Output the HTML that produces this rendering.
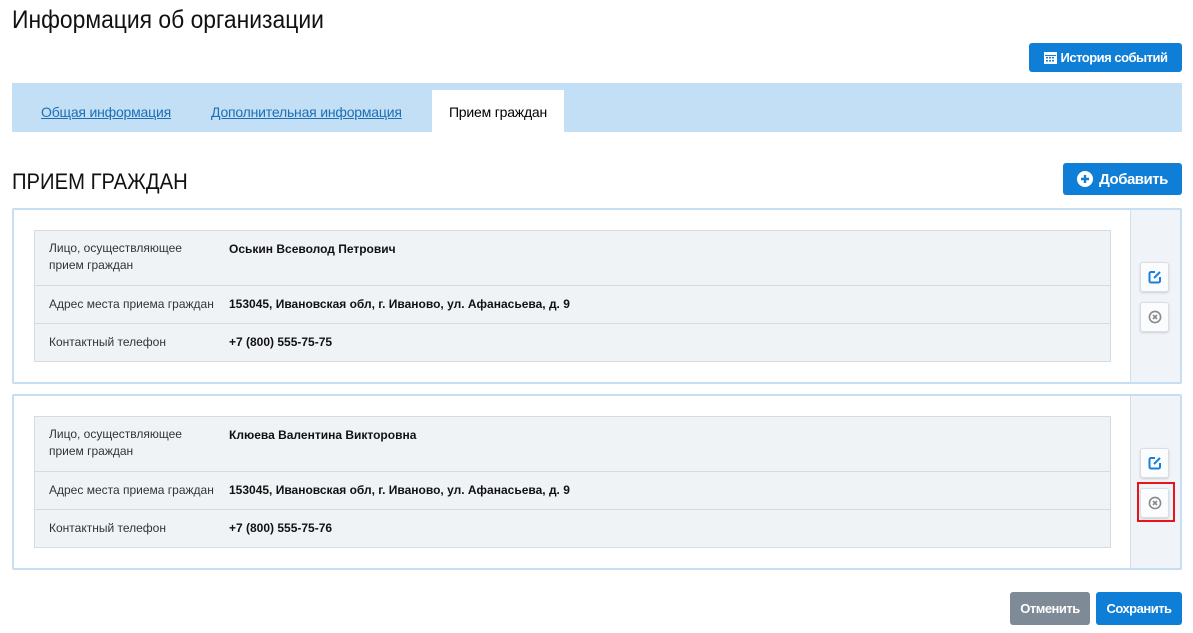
<!DOCTYPE html>
<html><head><meta charset="utf-8"><style>
*{box-sizing:border-box;margin:0;padding:0}
body{width:1193px;height:633px;background:#fff;font-family:"Liberation Sans",sans-serif;position:relative;overflow:hidden;color:#000}
.a{position:absolute}
.cond{font-family:"Liberation Sans Narrow","Liberation Sans",sans-serif}
.btn{position:absolute;background:#0f7ed6;color:#fff;border-radius:3px;font-size:14px;font-weight:bold;display:flex;align-items:center;justify-content:center;letter-spacing:-0.5px}
.card{position:absolute;left:12px;width:1170px;height:176px;border:2px solid #c5def3;border-radius:2px}
.side{position:absolute;right:0;top:0;bottom:0;width:50px;background:#f0f3f7;border-left:1px solid #d5dde6}
.tbl{position:absolute;left:20px;top:20px;width:1077px;height:132px;background:#f0f3f6;border:1px solid #d5dbe1}
.row{position:absolute;left:0;right:0;border-bottom:1px solid #d5dbe1;font-size:12px}
.row .l{position:absolute;left:14px;color:#333;line-height:17px}
.row .v{position:absolute;left:194px;font-weight:bold;color:#111}
.ib{position:absolute;left:9px;width:29px;height:30px;background:#fbfcfd;border:1px solid #d8dee5;border-radius:3px;box-shadow:0 1px 2px rgba(0,0,0,.15);display:flex;align-items:center;justify-content:center}
</style></head><body>
<div class="a cond" style="left:12px;top:6px;font-size:25px;color:#111;transform:scaleX(.915);transform-origin:left">Информация об организации</div>
<div class="btn" style="left:1029px;top:43px;width:153px;height:29px;font-size:13px"><svg width="13" height="13" viewBox="0 0 13 13" style="margin-right:4px"><rect x="0" y="1" width="13" height="12" fill="#fff"/><g fill="#0f7ed6"><rect x="1" y="4" width="11" height="1"/><rect x="2" y="6" width="2" height="1.5"/><rect x="5" y="6" width="2" height="1.5"/><rect x="8" y="6" width="2" height="1.5"/><rect x="2" y="9" width="2" height="1.5"/><rect x="5" y="9" width="2" height="1.5"/><rect x="8" y="9" width="2" height="1.5"/></g></svg>История событий</div>
<div class="a" style="left:12px;top:83px;width:1170px;height:49px;background:#c2dff5"></div>
<div class="a" style="left:41px;top:104px;font-size:14px;color:#1d6fb5;text-decoration:underline;letter-spacing:-0.2px">Общая информация</div>
<div class="a" style="left:211px;top:104px;font-size:14px;color:#1d6fb5;text-decoration:underline;letter-spacing:-0.2px">Дополнительная информация</div>
<div class="a" style="left:432px;top:90px;width:132px;height:42px;background:#fff;font-size:14px;text-align:center;padding-top:14px;letter-spacing:-0.2px">Прием граждан</div>
<div class="a cond" style="left:12px;top:169px;font-size:22px;color:#111;transform:scaleX(.92);transform-origin:left">ПРИЕМ ГРАЖДАН</div>
<div class="btn" style="left:1063px;top:163px;width:119px;height:32px;font-size:15px"><svg width="16" height="16" viewBox="0 0 16 16" style="margin-right:6px"><circle cx="8" cy="8" r="8" fill="#fff"/><path d="M8 4v8M4 8h8" stroke="#0f7ed6" stroke-width="2.4"/></svg>Добавить</div>

<div class="card" style="top:208px">
<div class="tbl">
<div class="row" style="top:0;height:55px"><div class="l" style="top:9px">Лицо, осуществляющее<br>прием граждан</div><div class="v" style="top:11px">Оськин Всеволод Петрович</div></div>
<div class="row" style="top:55px;height:38px"><div class="l" style="top:10px">Адрес места приема граждан</div><div class="v" style="top:11px">153045, Ивановская обл, г. Иваново, ул. Афанасьева, д. 9</div></div>
<div class="row" style="top:93px;height:38px;border:0"><div class="l" style="top:10px">Контактный телефон</div><div class="v" style="top:11px">+7 (800) 555-75-75</div></div>
</div>
<div class="side">
<div class="ib" style="top:52px"><svg width="14" height="14" viewBox="0 0 14 14"><path d="M7 2H3a1.5 1.5 0 0 0-1.5 1.5v7.5A1.5 1.5 0 0 0 3 12.5h7.5A1.5 1.5 0 0 0 12 11V7" fill="none" stroke="#1a7fd8" stroke-width="2"/><path d="M6 8l6-6" stroke="#1a7fd8" stroke-width="2"/></svg></div>
<div class="ib" style="top:92px"><svg width="14" height="14" viewBox="0 0 14 14"><circle cx="7" cy="7" r="5.6" fill="none" stroke="#8a8a8a" stroke-width="1.6"/><path d="M5 5l4 4M9 5l-4 4" stroke="#8a8a8a" stroke-width="1.6"/></svg></div>
</div>
</div>

<div class="card" style="top:394px">
<div class="tbl">
<div class="row" style="top:0;height:55px"><div class="l" style="top:9px">Лицо, осуществляющее<br>прием граждан</div><div class="v" style="top:11px">Клюева Валентина Викторовна</div></div>
<div class="row" style="top:55px;height:38px"><div class="l" style="top:10px">Адрес места приема граждан</div><div class="v" style="top:11px">153045, Ивановская обл, г. Иваново, ул. Афанасьева, д. 9</div></div>
<div class="row" style="top:93px;height:38px;border:0"><div class="l" style="top:10px">Контактный телефон</div><div class="v" style="top:11px">+7 (800) 555-75-76</div></div>
</div>
<div class="side">
<div class="ib" style="top:52px"><svg width="14" height="14" viewBox="0 0 14 14"><path d="M7 2H3a1.5 1.5 0 0 0-1.5 1.5v7.5A1.5 1.5 0 0 0 3 12.5h7.5A1.5 1.5 0 0 0 12 11V7" fill="none" stroke="#1a7fd8" stroke-width="2"/><path d="M6 8l6-6" stroke="#1a7fd8" stroke-width="2"/></svg></div>
<div class="ib" style="top:92px"><svg width="14" height="14" viewBox="0 0 14 14"><circle cx="7" cy="7" r="5.6" fill="none" stroke="#8a8a8a" stroke-width="1.6"/><path d="M5 5l4 4M9 5l-4 4" stroke="#8a8a8a" stroke-width="1.6"/></svg></div>
</div>
</div>
<div class="a" style="left:1137px;top:482px;width:38px;height:40px;border:2px solid #e8141b"></div>

<div class="btn" style="left:1010px;top:592px;width:80px;height:33px;background:#7e8a95;font-size:13px">Отменить</div>
<div class="btn" style="left:1096px;top:592px;width:86px;height:33px;font-size:13px">Сохранить</div>
</body></html>
